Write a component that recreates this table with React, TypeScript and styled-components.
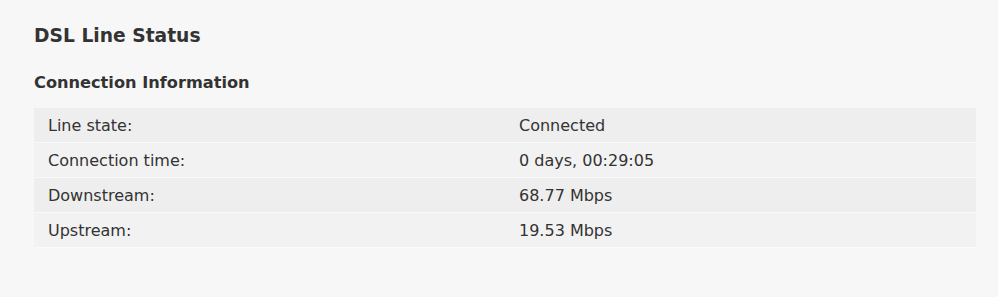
import React from "react";
import styled, { createGlobalStyle } from "styled-components";

const Global = createGlobalStyle`
  html, body { margin: 0; padding: 0; background: #f7f7f7; }
  body { font-family: "DejaVu Sans", Verdana, sans-serif; color: #333; }
`;

const Page = styled.div`
  padding: 24px 22px 40px 34px;
`;

const Title = styled.h1`
  margin: 0;
  font-size: 18.7px;
  line-height: 24px;
  font-weight: bold;
  color: #333;
`;

const Subtitle = styled.h2`
  margin: 24px 0 0;
  font-size: 16.2px;
  line-height: 22px;
  font-weight: bold;
  color: #333;
`;

const Table = styled.div`
  margin-top: 14px;
  display: flex;
  flex-direction: column;
`;

const Row = styled.div<{ $odd: boolean }>`
  display: grid;
  grid-template-columns: 1fr 1fr;
  height: 34px;
  align-items: center;
  background: ${(p) => (p.$odd ? "#eeeeee" : "#f2f2f2")};
  border-bottom: 1px solid #fafafa;
`;

const Cell = styled.div`
  padding: 2px 0 0 14px;
  font-size: 16px;
  line-height: 20px;
  color: #333;
`;

const rows: [string, string][] = [
  ["Line state:", "Connected"],
  ["Connection time:", "0 days, 00:29:05"],
  ["Downstream:", "68.77 Mbps"],
  ["Upstream:", "19.53 Mbps"],
];

export default function App() {
  return (
    <>
      <Global />
      <Page>
        <Title>DSL Line Status</Title>
        <Subtitle>Connection Information</Subtitle>
        <Table>
          {rows.map(([k, v], i) => (
            <Row key={k} $odd={i % 2 === 0}>
              <Cell>{k}</Cell>
              <Cell>{v}</Cell>
            </Row>
          ))}
        </Table>
      </Page>
    </>
  );
}
